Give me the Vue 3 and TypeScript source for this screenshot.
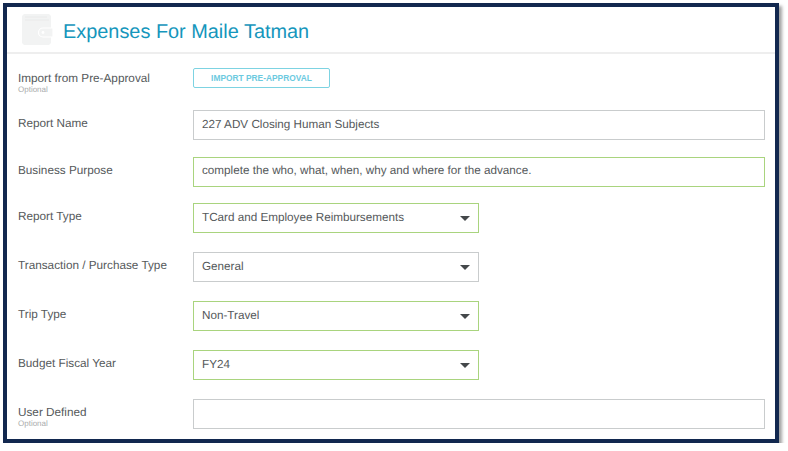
<script setup lang="ts">
interface Field {
  label: string
  value: string
  kind: 'input' | 'select'
  valid?: boolean
  optional?: boolean
}

const fields: Field[] = [
  { label: 'Report Name', value: '227 ADV Closing Human Subjects', kind: 'input' },
  { label: 'Business Purpose', value: 'complete the who, what, when, why and where for the advance.', kind: 'input', valid: true },
  { label: 'Report Type', value: 'TCard and Employee Reimbursements', kind: 'select', valid: true },
  { label: 'Transaction / Purchase Type', value: 'General', kind: 'select' },
  { label: 'Trip Type', value: 'Non-Travel', kind: 'select', valid: true },
  { label: 'Budget Fiscal Year', value: 'FY24', kind: 'select', valid: true },
  { label: 'User Defined', value: '', kind: 'input', optional: true },
]
</script>

<template>
  <div class="frame">
    <header class="head">
      <svg class="wallet" width="31" height="31" viewBox="0 0 31 31">
        <path d="M0 2l2-2h25l2 2v27l-2 2H2l-2-2z" fill="#f2f3f3" />
        <path d="M3 3h22M3 6h24" stroke="#e9eaea" stroke-width="1" fill="none" />
        <path d="M31 14h-10a4.500 4.500 0 0 0 0 9h10z" fill="#f2f3f3" stroke="#fff" stroke-width="1.200" />
        <circle cx="21" cy="18.500" r="1.400" fill="#fff" />
      </svg>
      <h1>Expenses For Maile Tatman</h1>
    </header>

    <main class="form">
      <div class="row import-row">
        <div class="label">
          <span>Import from Pre-Approval</span>
          <small>Optional</small>
        </div>
        <button type="button" class="import-btn">IMPORT PRE-APPROVAL</button>
      </div>

      <div v-for="f in fields" :key="f.label" class="row" :class="f.kind">
        <div class="label">
          <span>{{ f.label }}</span>
          <small v-if="f.optional">Optional</small>
        </div>
        <div class="control" :class="{ valid: f.valid }">
          <span class="value">{{ f.value }}</span>
          <i v-if="f.kind === 'select'" class="caret"></i>
        </div>
      </div>
    </main>
  </div>
</template>

<style scoped>
.frame {
  box-sizing: border-box;
  width: 776px;
  height: 440px;
  margin: 3px 0 0 3px;
  border: 4px solid #12284f;
  background: #fff;
  box-shadow: 3px 3px 3px rgba(90, 90, 90, 0.55);
  font-family: "Liberation Sans", Arial, sans-serif;
  text-rendering: geometricPrecision;
  overflow: hidden;
}

.head {
  display: flex;
  align-items: center;
  gap: 10px;
  height: 47px;
  padding: 0 0 0 15px;
  border-bottom: 2px solid #eeeeee;
  box-sizing: border-box;
}

.wallet {
  flex: none;
}

h1 {
  margin: 6px 0 0;
  font-size: 19.900px;
  font-weight: 400;
  color: #1596bc;
}

.form {
  display: flex;
  flex-direction: column;
  padding: 14px 10px 0 11px;
}

.row {
  display: flex;
  margin-bottom: 19px;
}

.row.input {
  margin-bottom: 16.500px;
}

.import-row {
  margin-bottom: 16px;
}

.label {
  flex: none;
  width: 175px;
  font-size: 11.750px;
  color: #55595b;
  padding-top: 7px;
}

.import-row .label {
  padding-top: 4px;
}

.label span {
  display: block;
  line-height: 13px;
}

.label small {
  display: block;
  font-size: 8px;
  line-height: 9px;
  color: #aaacad;
}

.import-btn {
  box-sizing: border-box;
  width: 137px;
  height: 20px;
  padding: 0;
  border: 1px solid #7dd3e2;
  border-radius: 2px;
  background: #fff;
  color: #6ccadf;
  font-family: inherit;
  font-size: 8.400px;
  font-weight: 700;
}

.control {
  box-sizing: border-box;
  display: flex;
  align-items: center;
  justify-content: space-between;
  width: 572px;
  height: 30px;
  padding: 0 8px 2px;
  border: 1px solid #c9cccd;
  font-size: 11.700px;
  color: #55595b;
}

.select .control {
  width: 286px;
}

.control.valid {
  border-color: #a9d47e;
}

.caret {
  width: 0;
  height: 0;
  margin-top: 2px;
  border-left: 5px solid transparent;
  border-right: 5px solid transparent;
  border-top: 5px solid #44484a;
}
</style>
